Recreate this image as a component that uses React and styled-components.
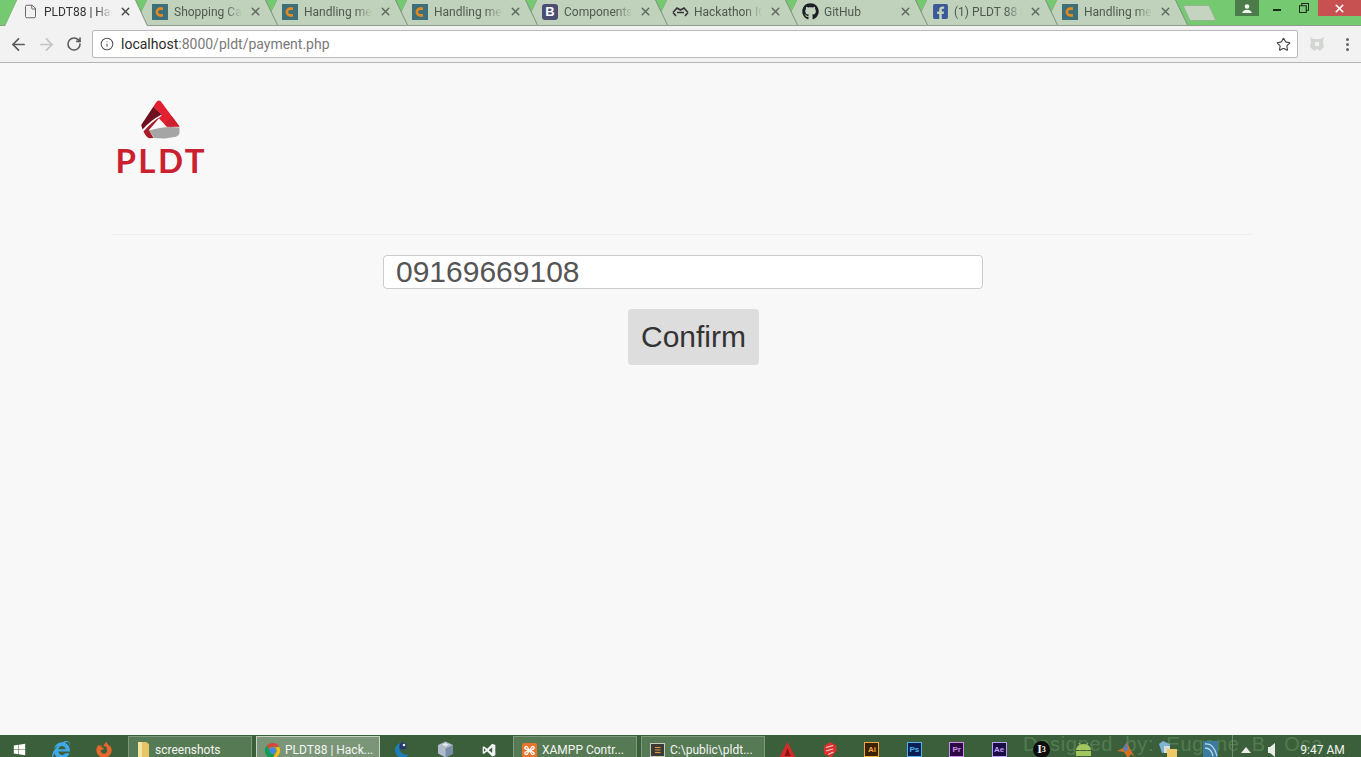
import React from 'react';
import styled, { createGlobalStyle } from 'styled-components';
import { ArrowLeft, ArrowRight, RotateCw, Info, Star, X, File } from 'lucide-react';
import { FaGithub, FaFacebookSquare, FaWindows, FaInternetExplorer, FaFirefoxBrowser } from 'react-icons/fa';
import { DiVisualstudio } from 'react-icons/di';

const GlobalStyle = createGlobalStyle`
    html, body {
        margin: 0;
        padding: 0;
        height: 100%;
        overflow: hidden;
        background: #f8f8f8;
    }
    #root {
        height: 100%;
    }
`;

const Screen = styled.div`
    height: 757px;
    display: flex;
    flex-direction: column;
    font-family: Roboto, "Liberation Sans", sans-serif;
    overflow: hidden;
`;

/* browser tab strip */
const TabStrip = styled.div`
    height: 26px;
    flex: none;
    display: flex;
    background: #74c971;
    border-bottom: 1px solid #8d9f8a;
    box-sizing: border-box;
    padding-left: 5px;
    position: relative;
`;

const Tab = styled.div`
    width: 143px;
    height: ${props => (props.$active ? 26 : 25)}px;
    flex: none;
    margin-right: -13px;
    position: relative;
    z-index: ${props => props.$order};
    background: #7f917c;
    clip-path: polygon(0 100%, 12px 0, calc(100% - 12px) 0, 100% 100%);
    &::before {
        content: '';
        position: absolute;
        inset: 0;
        background: ${props => (props.$active ? '#f2f2f2' : '#c0d1bc')};
        clip-path: polygon(0 100%, 12px 0, calc(100% - 13px) 0, calc(100% - 1px) 100%);
    }
`;

const TabInner = styled.div`
    position: relative;
    height: 25px;
    display: flex;
    align-items: center;
    padding: 0 0 2px 17px;
    box-sizing: border-box;
`;

const TabTitle = styled.span`
    margin-left: 6px;
    width: 68px;
    font-size: 12px;
    line-height: 16px;
    color: ${props => (props.$active ? '#333' : '#4f5a50')};
    white-space: nowrap;
    overflow: hidden;
    -webkit-mask-image: linear-gradient(to right, #000 76%, transparent 100%);
    mask-image: linear-gradient(to right, #000 76%, transparent 100%);
`;

const TabClose = styled.span`
    margin-left: 7px;
    display: flex;
    color: ${props => (props.$active ? '#444' : '#5c665c')};
`;

const FaviconBox = styled.span`
    width: 16px;
    height: 16px;
    flex: none;
    display: flex;
    align-items: center;
    justify-content: center;
    border-radius: ${props => props.$radius || 0}px;
    background: ${props => props.$bg || 'transparent'};
    color: ${props => props.$color || '#222'};
    font: bold 13px "Liberation Sans", sans-serif;
`;

const NewTab = styled.div`
    width: 27px;
    height: 16px;
    margin: 5px 0 0 11px;
    flex: none;
    background: #c5d4c1;
    border: 1px solid #8fb88c;
    box-sizing: border-box;
    transform: skewX(25deg);
    border-radius: 2px;
    position: relative;
    z-index: 0;
`;

const WindowControls = styled.div`
    position: absolute;
    top: 0;
    right: 0;
    display: flex;
    height: 16px;
`;

const WinButton = styled.div`
    width: ${props => props.$width}px;
    height: 100%;
    margin-left: ${props => props.$gap || 0}px;
    display: flex;
    align-items: center;
    justify-content: center;
    background: ${props => props.$bg || 'transparent'};
    color: ${props => props.$color || '#1c2b1b'};
`;

const MinimizeBar = styled.span`
    width: 8px;
    height: 2px;
    margin-top: 3px;
    background: currentColor;
`;

/* address bar row */
const Toolbar = styled.div`
    height: 37px;
    flex: none;
    display: flex;
    align-items: center;
    background: #f2f2f2;
    border-bottom: 1px solid #b5b5b5;
    box-sizing: border-box;
    padding-left: 4px;
`;

const NavButton = styled.span`
    width: 28px;
    display: flex;
    justify-content: center;
    color: ${props => (props.$disabled ? '#c4c4c4' : '#5b5b5b')};
`;

const Omnibox = styled.div`
    width: 1206px;
    height: 28px;
    margin-left: 4px;
    flex: none;
    display: flex;
    align-items: center;
    background: #fff;
    border: 1px solid #b9b9b9;
    border-radius: 2px;
    box-sizing: border-box;
    padding: 0 6px 0 7px;
    color: #555;
`;

const Url = styled.span`
    margin-left: 7px;
    flex: 1;
    font-size: 14px;
    color: #7a7a7a;
    & b {
        font-weight: 400;
        color: #2b2b2b;
    }
`;

const ToolbarEnd = styled.div`
    flex: 1;
    display: flex;
    align-items: center;
    padding-left: 10px;
`;

const MenuDots = styled.span`
    margin-left: 20px;
    display: flex;
    flex-direction: column;
    gap: 2px;
    & i {
        width: 3px;
        height: 3px;
        border-radius: 50%;
        background: #666;
    }
`;

/* page content */
const Page = styled.main`
    flex: 1;
    background: #f8f8f8;
    padding: 0 109px 0 113px;
`;

const Header = styled.header`
    height: 171px;
    border-bottom: 1px solid #eee;
    box-sizing: content-box;
    padding-left: 2px;
`;

const Logo = styled.div`
    width: 90px;
    padding-top: 37px;
    display: flex;
    flex-direction: column;
    align-items: center;
`;

const LogoWord = styled.span`
    font-family: Lato, "Liberation Sans", sans-serif;
    font-size: 33px;
    line-height: 24px;
    margin: 9px -2.5px 0 0;
    font-weight: 700;
    letter-spacing: 2.5px;
    color: #cb2030;
`;

const PaymentForm = styled.form`
    display: flex;
    flex-direction: column;
    align-items: flex-start;
    padding-top: 20px;
    margin: 0;
`;

const NumberInput = styled.input`
    width: 600px;
    height: 34px;
    margin-left: 270px;
    padding: 0 12px;
    box-sizing: border-box;
    background: #fff;
    border: 1px solid #ccc;
    border-radius: 4px;
    font-family: "Liberation Sans", Arial, sans-serif;
    font-size: 30px;
    color: #555;
    outline: none;
`;

const ConfirmButton = styled.button`
    width: 131px;
    height: 56px;
    margin: 20px 0 0 515px;
    background: #ddd;
    border: none;
    border-radius: 4px;
    font-family: "Liberation Sans", Arial, sans-serif;
    font-size: 30px;
    color: #333;
    padding: 0;
`;

/* windows taskbar, the shot cuts it off so its content sits low */
const Taskbar = styled.footer`
    height: 22px;
    flex: none;
    display: flex;
    align-items: stretch;
    position: relative;
    background: #3b5f3a;
    overflow: hidden;
`;

const Slot = styled.div`
    width: ${props => props.$width}px;
    flex: none;
    display: flex;
    align-items: center;
    justify-content: center;
    padding-top: 7px;
    box-sizing: border-box;
    position: relative;
    z-index: 1;
`;

const TaskButton = styled.div`
    width: 124px;
    flex: none;
    margin: 1px 0 0 ${props => props.$gap}px;
    display: flex;
    align-items: center;
    gap: 5px;
    padding: 6px 0 0 8px;
    box-sizing: border-box;
    background: ${props => (props.$active ? '#7a9577' : '#567a54')};
    border: 1px solid ${props => (props.$active ? '#c4d3c2' : '#7d987b')};
    border-bottom: none;
    font-size: 12px;
    color: #f4f6f3;
    white-space: nowrap;
    position: relative;
    z-index: 1;
`;

const Watermark = styled.span`
    position: absolute;
    left: 1023px;
    top: -2px;
    font-family: "Liberation Sans", sans-serif;
    font-size: 20px;
    letter-spacing: 0.7px;
    word-spacing: 6px;
    color: #527c50;
    white-space: nowrap;
`;

const TrayDivider = styled.span`
    width: 1px;
    flex: none;
    background: #6f8e6d;
    position: relative;
    z-index: 1;
`;

const Clock = styled.span`
    position: relative;
    z-index: 1;
    margin-left: 16px;
    padding-top: 7px;
    align-self: center;
    font-size: 12px;
    color: #f2f4f1;
    white-space: nowrap;
`;

const AdobeTile = styled.span`
    width: 15px;
    height: 15px;
    display: flex;
    align-items: center;
    justify-content: center;
    box-sizing: border-box;
    background: ${props => props.$bg};
    border: 1px solid ${props => props.$color};
    color: ${props => props.$color};
    font: bold 8px "Liberation Sans", sans-serif;
`;

const RoundBadge = styled.span`
    width: 17px;
    height: 17px;
    border-radius: 50%;
    display: flex;
    align-items: center;
    justify-content: center;
    background: #0d0d0d;
    color: #f2f2f2;
    font: bold 12px "Liberation Serif", serif;
    & sup {
        font-size: 8px;
        line-height: 0;
    }
`;

const CodeFavicon = () => (
    <FaviconBox $bg="#3d6f78">
        <svg width="12" height="12" viewBox="0 0 12 12">
            <path d="M9 2.600H6.200a3.400 3.400 0 0 0 0 6.800H9" fill="none" stroke="#e08a22" strokeWidth="2.600" />
        </svg>
    </FaviconBox>
);

const HackathonFavicon = () => (
    <FaviconBox>
        <svg width="17" height="12" viewBox="0 0 17 12" fill="none" stroke="#333" strokeWidth="1.600" style={{ flex: 'none' }}>
            <path d="M1 6.500 5 2l3.500 2L12 2l4 4.500M1 6.500 4 10M16 6.500 13 10M5 6.500h7" />
        </svg>
    </FaviconBox>
);

const TABS = [
    { title: 'PLDT88 | Hackathon', icon: <FaviconBox><File size={15} strokeWidth={1.4} color="#555" /></FaviconBox>, active: true },
    { title: 'Shopping Cart', icon: <CodeFavicon /> },
    { title: 'Handling messages', icon: <CodeFavicon /> },
    { title: 'Handling messages', icon: <CodeFavicon /> },
    { title: 'Components', icon: <FaviconBox $bg="#4b4d73" $color="#fff" $radius={3}>B</FaviconBox> },
    { title: 'Hackathon ICT', icon: <HackathonFavicon /> },
    { title: 'GitHub', icon: <FaviconBox><FaGithub size={17} color="#1b1f23" style={{ flex: 'none' }} /></FaviconBox> },
    { title: '(1) PLDT 88 Lite', icon: <FaviconBox><FaFacebookSquare size={17} color="#3b5998" style={{ flex: 'none' }} /></FaviconBox> },
    { title: 'Handling messages', icon: <CodeFavicon /> },
];

const LogoMark = () => (
    <svg width="40" height="39" viewBox="0 0 40 39">
        <path d="M16 2.500 Q18 -0.500 20.500 1 L39.500 26.500 L27 26.700 L19 18.500 L21.700 15 L13.300 6.700 Z" fill="#e2202f" />
        <path d="M27 26.700 L39.500 26.500 L32 16.500 L24 23.700 Z" fill="#cf1f2e" />
        <path d="M13.300 6.700 L21.500 14.500 Q11 20 2.500 29.500 L1.200 25 Z" fill="#6e1020" />
        <path d="M3.500 31.500 Q11 22.500 20.500 16.500 L9 30 L13.500 38 L9 38.200 Q6 37 3.500 31.500 Z" fill="#ab1a2a" />
        <path d="M9.500 30.500 Q24 25.500 39.500 27.500 L39.500 33 Q39 36 36 36.800 L25 38.500 L14 38 Z" fill="#a5a5a5" />
    </svg>
);

const ChromeIcon = () => (
    <svg width="15" height="15" viewBox="0 0 16 16">
        <path d="M8 0a8 8 0 0 1 7 4H8a4 4 0 0 0-3.800 2.600L2 2.600A8 8 0 0 1 8 0z" fill="#db4437" />
        <path d="M15 4a8 8 0 0 1-6.500 12L12 10.500A4 4 0 0 0 11 5z" fill="#f4c20d" />
        <path d="M8.500 16A8 8 0 0 1 2 2.600L5 8a4 4 0 0 0 4.500 3.800z" fill="#0f9d58" />
        <circle cx="8" cy="8" r="3" fill="#4285f4" />
    </svg>
);

const FolderIcon = () => (
    <svg width="13" height="16" viewBox="0 0 13 16">
        <path d="M1 0h8l3 2v14H1z" fill="#e8c468" />
        <path d="M1 0h4v16H1z" fill="#f6e3a4" />
    </svg>
);

const XamppIcon = () => (
    <svg width="15" height="15" viewBox="0 0 15 15">
        <rect width="15" height="15" rx="2" fill="#e8742c" />
        <path d="M3 4c3-2 3 3 4.500 3S9 2 12 4c1 3-3 2-3 3.500S13 9 12 11c-3 2-3-3-4.500-3S6 13 3 11c-1-3 3-2 3-3.500S2 7 3 4z" fill="none" stroke="#fff" strokeWidth="1.300" />
    </svg>
);

const SublimeIcon = () => (
    <svg width="15" height="14" viewBox="0 0 15 14">
        <rect x="0.500" y="0.500" width="14" height="13" fill="#3a3a36" stroke="#c9c9c0" />
        <path d="M5 4.500h5.500M5 7h5.500M5 9.500h5.500" stroke="#e8963a" strokeWidth="1.200" />
    </svg>
);

const AutocadIcon = () => (
    <svg width="17" height="16" viewBox="0 0 17 16">
        <path d="M8.500 0 17 16H0z" fill="#d42a2a" />
        <path d="M8.500 6 11.500 14H5.500z" fill="#8c1414" />
    </svg>
);

const SketchupIcon = () => (
    <svg width="14" height="16" viewBox="0 0 14 16">
        <path d="M7 0 13.500 3.500V9L8 15.500 1 12V4z" fill="#d8322e" />
        <path d="M3 5.500 10 3.500M3 9l7-2M5 12.500l5.500-2.500" stroke="#f4d4d0" strokeWidth="1.200" />
    </svg>
);

const EclipseIcon = () => (
    <svg width="16" height="17" viewBox="0 0 16 17">
        <path d="M7 2a7.500 7.500 0 1 0 8 11 7 7 0 0 1-8-11z" fill="#1c7fb8" />
        <circle cx="9" cy="5" r="3.500" fill="#26396e" />
        <circle cx="10" cy="4" r="1.300" fill="#eef2fa" />
    </svg>
);

const BoxIcon = () => (
    <svg width="17" height="17" viewBox="0 0 17 17">
        <path d="M8.500 0.500 16 4v8.500l-7.500 4-7.500-4V4z" fill="#aebccb" />
        <path d="M8.500 7.500 16 4v8.500l-7.500 4z" fill="#7a8fa6" />
        <path d="M5 3.500 8.500 2 12 3.500 8.500 5.500z" fill="#e2e8ee" />
    </svg>
);

const AndroidIcon = () => (
    <svg width="17" height="13" viewBox="0 0 17 13" fill="#a4c65e">
        <path d="M1 7a7.500 6 0 0 1 15 0z" />
        <path d="M4 0l2 3M13 0l-2 3" stroke="#a4c65e" />
        <rect x="1" y="8" width="15" height="5" />
    </svg>
);

const MatlabIcon = () => (
    <svg width="18" height="16" viewBox="0 0 18 16">
        <path d="M0 9 6 6 10 0l3 7 5 8-4-3-3 4-4-6z" fill="#d8701f" />
        <path d="M6 6l4-6 1 8-4 2z" fill="#5d7fb5" />
    </svg>
);

const FilesIcon = () => (
    <svg width="19" height="18" viewBox="0 0 19 18">
        <path d="M0 3 4 0l7 3-2 8-6 1z" fill="#7fb3d6" />
        <path d="M5 5h6v7H5z" fill="#d7dcd4" />
        <path d="M8 8h10v9H8z" fill="#ecc866" />
    </svg>
);

const MysqlIcon = () => (
    <svg width="17" height="19" viewBox="0 0 17 19">
        <rect y="1" width="15" height="17" fill="#3c7ba0" />
        <path d="M2 4c6-1 10 4 12 12M2 8c4 0 7 3 8 8" fill="none" stroke="#b8d8ea" strokeWidth="1.300" />
    </svg>
);

const SpeakerIcon = () => (
    <svg width="7" height="14" viewBox="0 0 7 14">
        <path d="M0 4h2l5-4v14L2 10H0z" fill="#e9ede8" />
    </svg>
);

const TrayArrow = () => (
    <svg width="10" height="6" viewBox="0 0 10 6">
        <path d="M5 0 10 6H0z" fill="#e9ede8" />
    </svg>
);

const RIGHT_APPS = [
    <AutocadIcon />,
    <SketchupIcon />,
    <AdobeTile $bg="#3b2206" $color="#f3a93c">Ai</AdobeTile>,
    <AdobeTile $bg="#0b1f52" $color="#4fb5f0">Ps</AdobeTile>,
    <AdobeTile $bg="#2c0a42" $color="#d08cf0">Pr</AdobeTile>,
    <AdobeTile $bg="#1d0d47" $color="#b9a2f4">Ae</AdobeTile>,
    <RoundBadge>I<sup>3</sup></RoundBadge>,
    <AndroidIcon />,
    <MatlabIcon />,
    <FilesIcon />,
    <MysqlIcon />,
];

const App = () => (
    <Screen>
        <GlobalStyle />
        <TabStrip>
            {TABS.map((tab, i) => (
                <Tab key={i} $active={tab.active} $order={20 - i}>
                    <TabInner>
                        {tab.icon}
                        <TabTitle $active={tab.active}>{tab.title}</TabTitle>
                        <TabClose $active={tab.active}><X size={13} strokeWidth={2.6} /></TabClose>
                    </TabInner>
                </Tab>
            ))}
            <NewTab />
            <WindowControls>
                <WinButton $width={24} $bg="#4c7c4a" $color="#f2f6f1">
                    <svg width="10" height="9" viewBox="0 0 12 11">
                        <circle cx="6" cy="3" r="2.800" fill="currentColor" />
                        <path d="M0 11c1-3 3-4 6-4s5 1 6 4z" fill="currentColor" />
                    </svg>
                </WinButton>
                <WinButton $width={26} $gap={5}><MinimizeBar /></WinButton>
                <WinButton $width={28}>
                    <svg width="10" height="10" viewBox="0 0 11 11" fill="none" stroke="currentColor" strokeWidth="1.200">
                        <path d="M0.500 3h7.500v7.500H0.500zM3 3V0.500h7.500V8H8" />
                    </svg>
                </WinButton>
                <WinButton $width={43} $bg="#c75050" $color="#fff"><X size={13} strokeWidth={3} /></WinButton>
            </WindowControls>
        </TabStrip>

        <Toolbar>
            <NavButton><ArrowLeft size={19} strokeWidth={2.2} /></NavButton>
            <NavButton $disabled><ArrowRight size={19} strokeWidth={2.2} /></NavButton>
            <NavButton><RotateCw size={16} strokeWidth={2.4} /></NavButton>
            <Omnibox>
                <Info size={14} strokeWidth={1.8} />
                <Url><b>localhost</b>:8000/pldt/payment.php</Url>
                <Star size={15} strokeWidth={1.8} color="#444" />
            </Omnibox>
            <ToolbarEnd>
                <svg width="18" height="16" viewBox="0 0 18 16">
                    <path d="M2 1l4 2h6l4-2-1 5 1 5-4 4-3-2-3 2-4-4 1-5z" fill="#d4d6d4" />
                    <rect x="7" y="6" width="4" height="4" fill="#f2f2f2" />
                </svg>
                <MenuDots><i /><i /><i /></MenuDots>
            </ToolbarEnd>
        </Toolbar>

        <Page>
            <Header>
                <Logo>
                    <LogoMark />
                    <LogoWord>PLDT</LogoWord>
                </Logo>
            </Header>
            <PaymentForm onSubmit={e => e.preventDefault()}>
                <NumberInput defaultValue="09169669108" />
                <ConfirmButton type="button">Confirm</ConfirmButton>
            </PaymentForm>
        </Page>

        <Taskbar>
            <Watermark>Designed by: Eugene B. Oca</Watermark>
            <Slot $width={39}><FaWindows size={13} color="#fff" /></Slot>
            <Slot $width={43}><FaInternetExplorer size={18} color="#3fa9e8" /></Slot>
            <Slot $width={43}><FaFirefoxBrowser size={16} color="#e8672a" /></Slot>
            <TaskButton $gap={3}><FolderIcon />screenshots</TaskButton>
            <TaskButton $gap={4} $active><ChromeIcon />PLDT88 | Hack...</TaskButton>
            <Slot $width={44}><EclipseIcon /></Slot>
            <Slot $width={43}><BoxIcon /></Slot>
            <Slot $width={43}><DiVisualstudio size={18} color="#f2f4f7" /></Slot>
            <TaskButton $gap={3}><XamppIcon />XAMPP Contr...</TaskButton>
            <TaskButton $gap={4}><SublimeIcon />C:\public\pldt...</TaskButton>
            <Slot $width={1} />
            {RIGHT_APPS.map((icon, i) => <Slot key={i} $width={42.4}>{icon}</Slot>)}
            <TrayDivider />
            <Slot $width={26}><TrayArrow /></Slot>
            <Slot $width={25}><SpeakerIcon /></Slot>
            <Clock>9:47 AM</Clock>
        </Taskbar>
    </Screen>
);

export default App;
